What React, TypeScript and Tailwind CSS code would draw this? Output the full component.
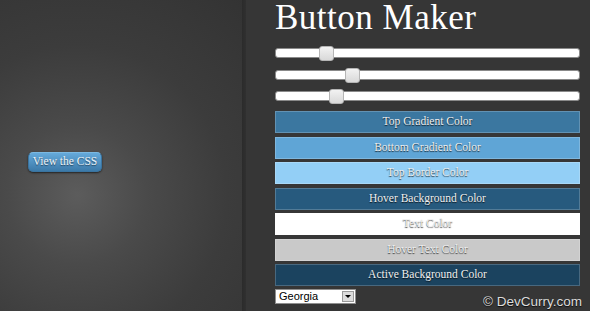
import React from "react";

const serif = { fontFamily: '"Liberation Serif", Georgia, serif' };
const sans = { fontFamily: '"Liberation Sans", Arial, sans-serif' };

function Slider({ pos }: { pos: number }) {
  return (
    <div className="relative h-[15px] w-[305px]">
      <div className="absolute left-0 right-0 top-[2px] h-[10px] rounded-[3px] border border-[#8a8a8a] bg-white" />
      <div
        className="absolute top-0 h-[15px] w-[15px] rounded-[3px] border border-[#b5b5b5] bg-gradient-to-b from-[#f2f2f2] to-[#d9d9d9]"
        style={{ left: pos }}
      />
    </div>
  );
}

const bars: { label: string; bg: string }[] = [
  { label: "Top Gradient Color", bg: "bg-[#3b77a0]" },
  { label: "Bottom Gradient Color", bg: "bg-[#5fa5d6]" },
  { label: "Top Border Color", bg: "bg-[#93cff6]" },
  { label: "Hover Background Color", bg: "bg-[#275a7e]" },
  { label: "Text Color", bg: "bg-white" },
  { label: "Hover Text Color", bg: "bg-[#c9c9c9]" },
  { label: "Active Background Color", bg: "bg-[#1b435f]" },
];

export default function App() {
  return (
    <div className="relative flex h-[311px] w-[590px] overflow-hidden bg-[#363636]">
      <div className="flex h-full w-[242px] shrink-0 items-start bg-[radial-gradient(circle_at_77px_195px,#5c5c5c_0px,#4a4a4a_70px,#3c3c3c_150px,#323232_270px)]">
        <div
          className="ml-[28px] mt-[152px] flex h-[20px] w-[74px] items-center justify-center rounded-[5px] border border-[#3a74a0] border-t-[#7bb9e2] bg-gradient-to-b from-[#65aadb] to-[#3c7aa9] text-[11.5px] text-[#eef4f8] shadow-[0_1px_2px_rgba(0,0,0,0.6)] [text-shadow:0_1px_1px_rgba(0,0,0,0.5)]"
          style={serif}
        >
          View the CSS
        </div>
      </div>
      <div className="h-full w-[4px] shrink-0 bg-gradient-to-r from-[#2b2b2b] to-[#303030]" />
      <div className="flex flex-col pl-[29px]">
        <div
          className="h-[36px] text-[35px] leading-[36px] tracking-[0.5px] text-white"
          style={serif}
        >
          Button Maker
        </div>
        <div className="mt-[10px] flex flex-col gap-[6.5px]">
          <Slider pos={44} />
          <Slider pos={70} />
          <Slider pos={54} />
        </div>
        <div className="mt-[7px] flex flex-col gap-[3.5px]">
          {bars.map((b) => (
            <div
              key={b.label}
              className={`flex h-[22px] w-[305px] items-center justify-center border border-white/20 ${b.bg} text-[11.5px] text-[#f0f0f0] [text-shadow:0_1px_1px_rgba(0,0,0,0.75)]`}
              style={serif}
            >
              {b.label}
            </div>
          ))}
        </div>
        <div className="mt-[3px] flex h-[15px] w-[81px] items-center border border-[#8f8f8f] bg-white">
          <span className="flex-1 pl-[3px] text-[11px] leading-none text-black" style={sans}>
            Georgia
          </span>
          <div className="mr-px flex h-[11px] w-[12px] items-center justify-center border border-[#9a9a9a] bg-[#dcdcdc]">
            <div className="h-0 w-0 border-x-[3px] border-t-[3px] border-x-transparent border-t-black" />
          </div>
        </div>
      </div>
      <div
        className="absolute bottom-[3px] right-[8px] text-[13.5px] leading-none text-[#dcdcdc] [text-shadow:0_1px_1px_rgba(0,0,0,0.8)]"
        style={sans}
      >
        © DevCurry.com
      </div>
    </div>
  );
}
